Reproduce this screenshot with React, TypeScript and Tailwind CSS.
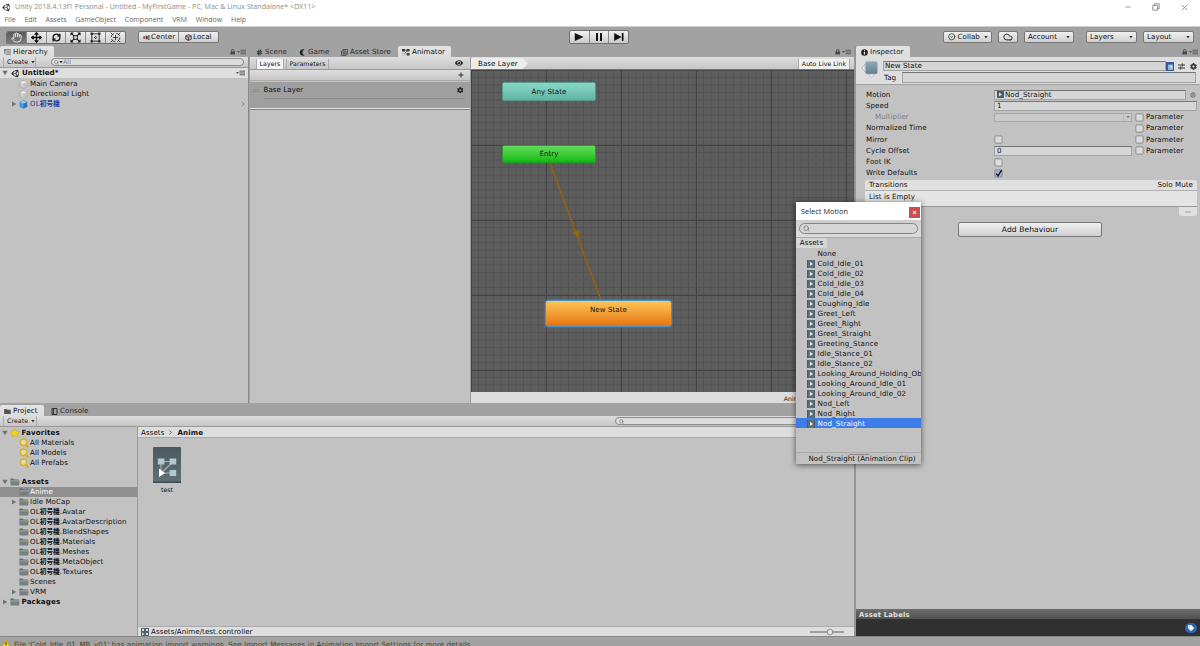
import React from 'react';
import clsx from 'clsx';
import { FaUnity, FaLock, FaCog, FaStar, FaEye, FaTag } from 'react-icons/fa';
import { Search, Minus, X, Move, RefreshCw, Cloud, CircleCheck, Hand, Hash, ChevronRight } from 'lucide-react';

const motions = [
  'Cold_Idle_01', 'Cold_Idle_02', 'Cold_Idle_03', 'Cold_Idle_04', 'Coughing_Idle', 'Greet_Left',
  'Greet_Right', 'Greet_Straight', 'Greeting_Stance', 'Idle_Stance_01', 'Idle_Stance_02',
  'Looking_Around_Holding_Object', 'Looking_Around_Idle_01', 'Looking_Around_Idle_02',
  'Nod_Left', 'Nod_Right', 'Nod_Straight',
];

const modelFolders = ['.Avatar', '.AvatarDescription', '.BlendShapes', '.Materials', '.Meshes', '.MetaObject', '.Textures'];

const buttonClass = 'flex items-center rounded-[2px] border border-[#777] bg-linear-to-b from-[#f0f0f0] to-[#cfcfcf]';
const barClass = 'bg-linear-to-b from-[#dedede] to-[#c6c6c6]';

/* ---------- small drawings ---------- */

const Arrow = ({ open, className }: { open?: boolean; className?: string }) => (
  <svg viewBox="0 0 6 6" className={clsx('size-[6px] shrink-0', className)}>
    <path d={open ? 'M.3 .8H5.7L3 5.2Z' : 'M1 .4V5.6L5.2 3Z'} fill="#737373" />
  </svg>
);

const Caret = () => (
  <svg viewBox="0 0 4 3" className="h-[2.5px] w-[4px] shrink-0">
    <path d="M0 0H4L2 3Z" fill="#333" />
  </svg>
);

const PanelMenu = () => (
  <svg viewBox="0 0 9 6" className="h-[6px] w-[9px] shrink-0">
    <path d="M0 2H3L1.5 4Z" fill="#555" />
    <path d="M3.5 1.2H9M3.5 3H9M3.5 4.8H9" stroke="#5c5c5c" strokeWidth="1" />
  </svg>
);

const PanelCorner = () => (
  <div className="flex items-center gap-[2px] pt-px">
    <FaLock size={5.5} color="#4a4a4a" />
    <PanelMenu />
  </div>
);

const Folder = () => (
  <svg viewBox="0 0 10 8" className="h-[8px] w-[10px] shrink-0">
    <path d="M.4 1.2C.4.8.6.5 1 .5H3.4L4.4 1.5H8.9V3H.4Z" fill="#66706f" />
    <path d="M.4 2.6H9.6L9.2 7.2C9.2 7.4 9 7.5 8.8 7.5H1C.6 7.5.4 7.3.4 7Z" fill="#75807f" />
    <path d="M.6 2.9H9.4" stroke="#b4bbbb" strokeWidth=".7" />
  </svg>
);

const Cube = ({ blue }: { blue?: boolean }) => (
  <svg viewBox="0 0 10 10" className="size-[9px] shrink-0">
    <path d="M5 .5L9 2.3V7.5L5 9.5L1 7.5V2.3Z" fill={blue ? '#4c9be0' : '#d0d0d0'} stroke={blue ? '#4284bd' : '#999'} strokeWidth=".6" />
    <path d="M5 .7L8.8 2.4L5 4.3L1.2 2.4Z" fill={blue ? '#8fcbf7' : '#e8e8e8'} />
    <path d="M5 4.3V9.3L8.8 7.4V2.5Z" fill={blue ? '#2d74b8' : '#c0c0c0'} />
  </svg>
);

const Clip = () => (
  <svg viewBox="0 0 8 8" className="size-[8px] shrink-0">
    <path d="M0 0H8V8H0Z" fill="#5d6e78" />
    <path d="M0 0H1V8H0ZM7 0H8V8H7Z" fill="#4b5b64" />
    <path d="M3 1.8V6L6 3.9Z" fill="#e6eef0" />
  </svg>
);

const Magnifier = () => (
  <svg viewBox="0 0 10 10" className="size-[10px] shrink-0">
    <path d="M6.6 6.6L8.8 8.8" stroke="#d3a91c" strokeWidth="2" strokeLinecap="round" />
    <circle cx="4.5" cy="4.3" r="3.2" fill="#dedac2" stroke="#dcb420" strokeWidth="1.5" />
  </svg>
);

const AnimatorGlyph = () => (
  <svg viewBox="0 0 8 8" className="size-[8px] shrink-0">
    <path d="M0 1H3V3.4H0ZM4.6 1H7.6V3.4H4.6ZM4.6 5H7.6V7.4H4.6Z" fill="#3c3c3c" />
    <path d="M1.5 2.2H6M1.5 6.6L5.5 2.4" stroke="#3c3c3c" strokeWidth=".7" />
    <path d="M.8 4.5V7.6L3 6Z" fill="#eee" stroke="#777" strokeWidth=".3" />
  </svg>
);

const ControllerIcon = () => (
  <svg viewBox="0 0 28 36" className="h-[36px] w-[28px]">
    <defs>
      <linearGradient id="ctrl" x1="0" y1="0" x2="0" y2="1">
        <stop offset="0" stopColor="#4c5960" />
        <stop offset="1" stopColor="#5f7075" />
      </linearGradient>
    </defs>
    <rect width="28" height="36" rx="1" fill="url(#ctrl)" />
    <path d="M0 34.5H28V36H0Z" fill="#3e4a50" />
    <path d="M8 14.5H20M8 14.5V25M8 26L20 15M9 26H20" stroke="#9fb2b8" strokeWidth="1.2" fill="none" />
    <path d="M4.8 11.5H11.4V17.5H4.8ZM16.6 11.5H23.2V17.5H16.6ZM16.6 23H23.2V29H16.6Z" fill="#b5c8ce" />
    <path d="M6 21.5V30L12 26.2Z" fill="#fff" />
  </svg>
);

const Warning = () => (
  <svg viewBox="0 0 10 9" className="h-[9px] w-[10px] shrink-0">
    <path d="M5 .5L9.6 8.5H.4Z" fill="#f5d91f" stroke="#a08a10" strokeWidth=".6" />
    <path d="M4.5 3H5.5V6H4.5ZM4.5 6.8H5.5V7.8H4.5Z" fill="#222" />
  </svg>
);

const OL = () => (
  <>OL<span className="font-['Noto_Sans_CJK_JP',sans-serif] text-[6.7px] leading-none font-bold">初号機</span></>
);

/* ---------- shared pieces ---------- */

const Tab = ({ active, className, children }: { active?: boolean; className?: string; children: React.ReactNode }) => (
  <div
    className={clsx(
      'flex h-[11px] items-center gap-[2px] rounded-t-[2px] pt-px',
      active ? 'bg-linear-to-b from-[#e4e4e4] to-[#dcdcdc] text-[#111]' : 'text-[#2d2d2d]',
      className,
    )}
  >
    {children}
  </div>
);

const Dropdown = ({ label, className }: { label: React.ReactNode; className?: string }) => (
  <div className={clsx(buttonClass, 'h-[12px] justify-between px-[3px]', className)}>
    {label}
    <Caret />
  </div>
);

const Checkbox = ({ checked }: { checked?: boolean }) => (
  <svg viewBox="0 0 9 9" className="size-[9px] shrink-0">
    <rect x=".9" y=".9" width="7.2" height="7.2" rx="1" fill={checked ? '#9cb5e2' : '#dcdcdc'} stroke="#747474" strokeWidth=".7" />
    {checked && <path d="M2.2 4.6L4 6.8L7.6 1.2" stroke="#111" strokeWidth="1.3" fill="none" />}
  </svg>
);

const TreeRow = ({ indent, open, arrow, icon, selected, children }: {
  indent?: boolean; open?: boolean; arrow?: boolean; icon: React.ReactNode; selected?: boolean; children: React.ReactNode;
}) => (
  <div className={clsx('flex h-[10px] items-center', selected && 'bg-[#8f8f8f] text-white', indent ? 'pl-[11px]' : 'pl-[2px]')}>
    <div className="flex w-[8px] shrink-0">{arrow && <Arrow open={open} />}</div>
    <div className={clsx('flex shrink-0', indent ? 'w-[11px]' : 'w-[11.5px]')}>{icon}</div>
    <span className={clsx('h-[10px] whitespace-nowrap', !indent && 'font-bold tracking-[0.15px]')}>{children}</span>
  </div>
);

const Property = ({ label, dim, param, children }: { label: string; dim?: boolean; param?: boolean; children?: React.ReactNode }) => (
  <div className="flex h-[11.25px] items-center">
    <span className={clsx('w-[128px] shrink-0', dim && 'pl-[9px] text-[#808080]')}>{label}</span>
    <div className="flex min-w-0 flex-1 items-center">{children}</div>
    {param && (
      <div className="flex w-[62px] shrink-0 items-center gap-[2px]">
        <Checkbox />
        Parameter
      </div>
    )}
  </div>
);

/* ---------- panels ---------- */

const TitleBar = () => (
  <header className="h-[26px] shrink-0 bg-white font-['Open_Sans',sans-serif] text-[7px] tracking-normal text-[#8a8a8a]">
    <div className="flex h-[14px] items-center justify-between pr-[11px] pl-[2px]">
      <div className="flex items-center gap-[4px]">
        <FaUnity size={9} color="#222" />
        <span className="tracking-[0.05px] whitespace-nowrap">Unity 2018.4.13f1 Personal - Untitled - MyFirstGame - PC, Mac &amp; Linux Standalone* &lt;DX11&gt;</span>
      </div>
      <div className="flex items-center gap-[20px] text-[#777]">
        <Minus size={8} strokeWidth={2} />
        <svg viewBox="0 0 8 8" className="size-[8px]" fill="none" stroke="#777" strokeWidth=".8">
          <path d="M.8 2.4H5.6V7.2H.8ZM2.4 2.4V.8H7.2V5.6H5.6" />
        </svg>
        <X size={9} strokeWidth={2} />
      </div>
    </div>
    <nav className="flex h-[12px] items-center gap-[8.8px] pl-[4.5px] text-[#666]">
      {['File', 'Edit', 'Assets', 'GameObject', 'Component', 'VRM', 'Window', 'Help'].map((item) => (
        <span key={item}>{item}</span>
      ))}
    </nav>
  </header>
);

const Toolbar = () => (
  <div className="flex h-[20px] shrink-0 items-center border-t border-[#d0d0d0] pt-px pr-[6px] pl-[6px]">
    <div className="flex h-[13px] w-[120px] divide-x divide-[#8a8a8a] overflow-hidden rounded-[2px] border border-[#6f6f6f] bg-linear-to-b from-[#eee] to-[#cfcfcf] *:flex *:flex-1 *:items-center *:justify-center">
      <div className="bg-linear-to-b from-[#5b5b5b] to-[#7b7b7b]"><Hand size={11} strokeWidth={2} color="#eee" /></div>
      <div><Move size={11} strokeWidth={3} color="#111" /></div>
      <div><RefreshCw size={9} strokeWidth={3.5} color="#111" /></div>
      <div>
        <svg viewBox="0 0 12 12" className="size-[11px]">
          <path d="M1.5 1.5L10.5 10.5M10.5 1.5L1.5 10.5" stroke="#111" strokeWidth="1.2" />
          <path d="M.5.5H4L.5 4ZM11.5.5H8L11.5 4ZM.5 11.5H4L.5 8ZM11.5 11.5H8L11.5 8Z" fill="#111" />
          <path d="M4 4H8V8H4Z" fill="#ddd" stroke="#111" />
        </svg>
      </div>
      <div>
        <svg viewBox="0 0 12 12" className="size-[11px]" fill="none" stroke="#222">
          <path d="M2 2H10V10H2Z" />
          <path d="M.6.6H3V3H.6ZM9 .6H11.4V3H9ZM.6 9H3V11.4H.6ZM9 9H11.4V11.4H9Z" fill="#222" stroke="none" />
          <circle cx="6" cy="6" r="1" />
        </svg>
      </div>
      <div>
        <svg viewBox="0 0 12 12" className="size-[11px]" fill="none" stroke="#333">
          <circle cx="6" cy="6" r="4.8" strokeDasharray="5.5 2" strokeWidth=".9" />
          <path d="M6 3.2V8.8M3.2 6H8.8M.8.8L3.4 3.4M11.2.8L8.6 3.4M.8 11.2L3.4 8.6M11.2 11.2L8.6 8.6" />
        </svg>
      </div>
    </div>
    <div className="ml-[12px] flex h-[12px] w-[81px] rounded-[2px] border border-[#777] bg-linear-to-b from-[#f0f0f0] to-[#cfcfcf]">
      <div className="flex w-[40px] items-center gap-px border-r border-[#888] pl-[4px]">
        <svg viewBox="0 0 8 6" className="h-[5px] w-[7px]">
          <path d="M0 2L2 1V5L0 4Z" fill="#a33" />
          <path d="M3 1H5.5V5H3ZM6.3 0H7.6V6H6.3Z" fill="#444" />
        </svg>
        Center
      </div>
      <div className="flex items-center gap-px pl-[6px]">
        <svg viewBox="0 0 8 8" className="size-[7px]" fill="none" stroke="#444">
          <path d="M4 .6L7.2 2.2V5.8L4 7.4L.8 5.8V2.2Z" fill="#bbb" />
          <path d="M.8 2.2L4 3.8L7.2 2.2M4 3.8V7.4" />
          <path d="M1 5.8L4 7.3" stroke="#b33" />
        </svg>
        Local
      </div>
    </div>
    <div className="ml-[350px] flex h-[14px] w-[60px] divide-x divide-[#8a8a8a] rounded-[2px] border border-[#6f6f6f] bg-linear-to-b from-[#f2f2f2] to-[#cacaca] *:flex *:flex-1 *:items-center *:justify-center">
      <div><svg viewBox="0 0 10 8" className="h-[8px] w-[10px]"><path d="M.8 0V8L9.6 4Z" fill="#111" /></svg></div>
      <div><svg viewBox="0 0 8 8" className="size-[8px]"><path d="M1 0H3V8H1ZM5 0H7V8H5Z" fill="#111" /></svg></div>
      <div><svg viewBox="0 0 10 8" className="h-[8px] w-[10px]"><path d="M.2 0V8L7.6 4ZM7.8 0H9.5V8H7.8Z" fill="#111" /></svg></div>
    </div>
    <div className="ml-auto flex">
      <Dropdown className="w-[49px]" label={<span className="flex items-center gap-[2px]"><CircleCheck size={7.5} strokeWidth={2} className="ml-px" />Collab</span>} />
      <div className={clsx(buttonClass, 'ml-[6px] h-[12px] w-[20px] justify-center')}>
        <Cloud size={10} strokeWidth={2} />
      </div>
      <Dropdown className="ml-[6px] w-[50px]" label="Account" />
      <Dropdown className="ml-[12px] w-[51px]" label="Layers" />
      <Dropdown className="ml-[6px] w-[51px]" label="Layout" />
    </div>
  </div>
);

const Hierarchy = () => (
  <section className="flex w-[249px] shrink-0 flex-col">
    <div className="flex h-[11px] items-center justify-between pr-[3px]">
      <Tab active className="w-[54px] pl-[4px]">
        <svg viewBox="0 0 8 7" className="h-[6px] w-[7px]" stroke="#444" fill="none"><path d="M0 1H8M2.5 3.5H8M2.5 6H8M1 1V6" strokeWidth=".9" /></svg>
        Hierarchy
      </Tab>
      <PanelCorner />
    </div>
    <div className="flex min-h-0 flex-1 flex-col border-r border-[#8a8a8a] bg-[#c2c2c2]">
      <div className={clsx(barClass, 'flex h-[11px] shrink-0 items-center border-b border-[#999]')}>
        <div className="ml-[3px] flex h-full w-[33px] items-center gap-[3px] border-r border-l border-[#aaa] pl-[3px] text-[6.3px]">
          Create <Caret />
        </div>
        <div className="ml-[15px] flex h-[8px] w-[193px] items-center rounded-full border border-[#8b8b8b] bg-[#dcdcdc] pl-[2px] text-[6.3px] text-[#777]">
          <Search size={5} strokeWidth={3} /><Caret />All
        </div>
      </div>
      <div className="flex h-[10px] shrink-0 items-center bg-[#dedede] pr-[3px] pl-[2px]">
        <Arrow open />
        <FaUnity size={9} className="ml-[3px]" color="#111" />
        <span className="ml-[2px] flex-1 font-bold">Untitled*</span>
        <PanelMenu />
      </div>
      <div className="pt-px">
        <TreeRow indent icon={<Cube />}>Main Camera</TreeRow>
        <TreeRow indent icon={<Cube />}>Directional Light</TreeRow>
        <div className="flex items-center justify-between text-[#1c3f9e]">
          <TreeRow indent arrow icon={<Cube blue />}><OL /></TreeRow>
          <ChevronRight size={8} strokeWidth={2.5} color="#777" className="mr-px" />
        </div>
      </div>
    </div>
  </section>
);

const minor = Array.from({ length: 52 }, (_, i) => i * 7.5);
const major = Array.from({ length: 6 }, (_, i) => i * 75);

const Graph = () => (
  <div className="relative min-h-0 flex-1 overflow-hidden bg-[#5d5d5d]">
    <svg viewBox="0 0 384 322" className="h-[322px] w-[384px]">
      {minor.map((p) => <path key={p} d={`M${p} 0V322M0 ${p}H384`} stroke="#525252" strokeWidth=".9" />)}
      {major.map((p) => <path key={p} d={`M${p + 0.5} 0V322M0 ${p + 0.5}H384`} stroke="#434343" strokeWidth="1" />)}
      <path d="M79 93L130 230" stroke="#8f6110" strokeWidth="1.7" />
      <path d="M101.5 162.5L108 160L107.7 168Z" fill="#9a6606" />
    </svg>
    <div className="absolute top-[12px] left-[31px] flex h-[19px] w-[94px] items-center justify-center rounded-[2px] border border-[#569a8c] bg-linear-to-b from-[#88d9c6] to-[#62b3a4]">Any State</div>
    <div className="absolute top-[75px] left-[31px] flex h-[18px] w-[94px] items-center justify-center rounded-[2px] border border-[#2a9a2a] bg-linear-to-b from-[#5fdc58] to-[#04bb08]">Entry</div>
    <div className="absolute top-[230px] left-[74px] flex h-[27px] w-[127px] justify-center rounded-[3px] border border-[#4a92cc] bg-linear-to-b from-[#fdc556] to-[#e57405] pt-[4px] shadow-[0_0_2px_#4a92cc]">New State</div>
  </div>
);

const Animator = () => (
  <section className="flex min-w-0 flex-1 flex-col pl-px">
    <div className="flex h-[11px] items-center pr-[3px]">
      <Tab className="ml-[6px] w-[43px]"><Hash size={7} strokeWidth={3} />Scene</Tab>
      <Tab className="w-[42px]">
        <svg viewBox="0 0 7 7" className="size-[7px]"><path d="M5.6.6A3.3 3.3 0 1 0 5.6 6.4L3.6 5V2Z" fill="#222" /></svg>
        Game
      </Tab>
      <Tab className="w-[59px]">
        <svg viewBox="0 0 7 7" className="size-[7px] shrink-0" fill="none" stroke="#444" strokeWidth=".8"><path d="M.5 2H5V6.5H.5ZM2 2V.5H6.5V5H5M2 3.5H3.7V5H2Z" /></svg>
        <span className="whitespace-nowrap">Asset Store</span>
      </Tab>
      <Tab active className="ml-[-2px] w-[53px] pl-[4px]"><AnimatorGlyph />Animator</Tab>
      <div className="ml-auto"><PanelCorner /></div>
    </div>
    <div className="flex min-h-0 flex-1">
      <div className="flex w-[221px] shrink-0 flex-col border-r border-[#999] bg-[#c2c2c2]">
        <div className={clsx(barClass, 'flex h-[13px] shrink-0 items-end border-b border-[#999] text-[6.2px]')}>
          <div className="ml-[6px] flex h-[10px] w-[28px] items-center justify-center border-x border-[#aaa] bg-[#f4f4f4]">Layers</div>
          <div className="ml-[2px] flex h-[10px] w-[43px] items-center justify-center border-x border-[#aaa]">Parameters</div>
          <FaEye size={8} className="mr-[7px] mb-[2px] ml-auto" color="#222" />
        </div>
        <div className={clsx(barClass, 'flex h-[11px] shrink-0 items-center justify-end border-b border-[#aaa] pr-[6px]')}>
          <svg viewBox="0 0 6 6" className="size-[6px]"><path d="M3 .5V5.5M.5 3H5.5" stroke="#333" strokeWidth="1.1" /></svg>
        </div>
        <div className="mt-px flex h-[26px] shrink-0 gap-[4.5px] bg-[#9f9f9f] pt-[3px] pr-[6px] pl-[3px]">
          <div className="mt-[4px] h-[3px] w-[6px] border-y border-[#8c8c8c]" />
          <div className="h-[14px] flex-1 border-b border-[#898989]">
            <div className="flex h-[10px] items-center justify-between pr-px">Base Layer <FaCog size={6.5} color="#222" /></div>
          </div>
        </div>
        <div className="h-[2px] shrink-0 border-b border-[#848484] bg-[#e2e2e2]" />
      </div>
      <div className="flex min-w-0 flex-1 flex-col">
        <div className={clsx(barClass, 'flex h-[13px] shrink-0 items-end justify-between border-b border-[#777]')}>
          <div className="flex h-[11px] w-[57px] items-center bg-[#ececec] pl-[7px] [clip-path:polygon(0_0,91%_0,100%_50%,91%_100%,0_100%)]">Base Layer</div>
          <div className="mr-[4px] flex h-[10px] w-[52px] items-center justify-center border-x border-[#aaa] bg-[#f0f0f0] text-[6.2px] whitespace-nowrap">Auto Live Link</div>
        </div>
        <Graph />
        <div className="flex h-[11px] shrink-0 items-center justify-end bg-[#dcdcdc] pt-[2px] pr-[4px] text-[6.2px] whitespace-nowrap">Anime/test.controller</div>
      </div>
    </div>
  </section>
);

const Project = () => (
  <section className="flex h-[231px] shrink-0 flex-col">
    <div className="flex h-[11px] items-center">
      <Tab active className="w-[44px] pl-[4px]"><svg viewBox="0 0 8 6" className="h-[5px] w-[7px]"><path d="M0 0H3L4 1H8V6H0Z" fill="#555" /></svg>Project</Tab>
      <Tab className="pl-[7px]"><svg viewBox="0 0 7 7" className="size-[7px]" fill="none" stroke="#333"><path d="M1 .5H6V6.5H1ZM2.5.5V6.5" /></svg>Console</Tab>
    </div>
    <div className={clsx(barClass, 'flex h-[11px] shrink-0 items-center border-b border-[#999]')}>
      <div className="ml-[3px] flex h-full w-[34px] items-center gap-[3px] border-r border-l border-[#aaa] pl-[3px] text-[6.3px]">Create <Caret /></div>
      <div className="ml-[578px] flex h-[8px] w-[230px] items-center rounded-full border border-[#8b8b8b] bg-[#dcdcdc] pl-[3px]"><Search size={5} strokeWidth={3} color="#777" /></div>
    </div>
    <div className="flex min-h-0 flex-1">
      <div className="w-[138px] shrink-0 border-r border-[#999] bg-[#c2c2c2] pt-px">
        <TreeRow arrow open icon={<FaStar size={9.5} color="#f5cf1a" stroke="#b98e10" strokeWidth={20} />}>Favorites</TreeRow>
        <TreeRow indent icon={<Magnifier />}>All Materials</TreeRow>
        <TreeRow indent icon={<Magnifier />}>All Models</TreeRow>
        <TreeRow indent icon={<Magnifier />}>All Prefabs</TreeRow>
        <div className="h-[9px]" />
        <TreeRow arrow open icon={<Folder />}>Assets</TreeRow>
        <TreeRow indent selected icon={<Folder />}>Anime</TreeRow>
        <TreeRow indent arrow icon={<Folder />}>Idle MoCap</TreeRow>
        {modelFolders.map((name) => (
          <TreeRow key={name} indent icon={<Folder />}><OL />{name}</TreeRow>
        ))}
        <TreeRow indent icon={<Folder />}>Scenes</TreeRow>
        <TreeRow indent arrow icon={<Folder />}>VRM</TreeRow>
        <TreeRow arrow icon={<Folder />}>Packages</TreeRow>
      </div>
      <div className="flex min-w-0 flex-1 flex-col bg-[#c2c2c2]">
        <div className="flex h-[11px] shrink-0 items-center border-b border-[#aaa] bg-[#dedede] pt-px pl-[3px]">
          Assets <ChevronRight size={7} strokeWidth={2} className="mx-[3px]" /> <b className="tracking-[0.15px]">Anime</b>
        </div>
        <div className="flex flex-1 flex-col pt-[9px] pl-[15px]">
          <div className="flex w-[28px] flex-col items-center gap-[3px] text-[6.2px]">
            <ControllerIcon />
            <span className="leading-[8px]">test</span>
          </div>
        </div>
        <div className="flex h-[10px] shrink-0 items-center border-t border-[#aaa] bg-[#dedede] pr-[10px] pl-[3px]">
          <svg viewBox="0 0 8 8" className="mr-[2px] size-[8px]"><path d="M0 0H8V8H0Z" fill="#52636b" /><path d="M1 1H3V3H1ZM5 1H7V3H5ZM5 5H7V7H5ZM1 4.5L3.5 6L1 7.5Z" fill="#d5e0e4" /></svg>
          <span className="flex-1">Assets/Anime/test.controller</span>
          <svg viewBox="0 0 34 8" className="h-[8px] w-[34px]">
            <path d="M0 4H34" stroke="#888" strokeWidth="1.6" />
            <circle cx="20" cy="4" r="2.8" fill="#e2e2e2" stroke="#777" strokeWidth=".8" />
          </svg>
        </div>
      </div>
    </div>
  </section>
);

const fieldClass = 'flex items-center border border-[#a2a2a2] border-t-[#777] bg-[#d6d6d6]';

const Inspector = () => (
  <section className="flex w-[346px] shrink-0 flex-col border-l-2 border-[#959595]">
    <div className="flex h-[11px] items-center justify-between pr-[2px]">
      <Tab active className="w-[54px] pl-[5px]">
        <svg viewBox="0 0 7 7" className="size-[7px]"><circle cx="3.5" cy="3.5" r="3.3" fill="#222" /><path d="M3 1.2H4.1V2.2H3ZM2.8 2.9H4.1V5.6H2.8Z" fill="#eee" /></svg>
        Inspector
      </Tab>
      <PanelCorner />
    </div>
    <div className="flex min-h-0 flex-1 flex-col bg-[#c2c2c2]">
      <div className="flex h-[28px] shrink-0 border-b border-[#a0a0a0] bg-[#dedede] pl-[5px]">
        <svg viewBox="0 0 18 20" className="mt-[2px] h-[20px] w-[18px] shrink-0">
          <defs><linearGradient id="state" x1="0" y1="0" x2="0" y2="1"><stop offset="0" stopColor="#8eaab8" /><stop offset="1" stopColor="#647f8e" /></linearGradient></defs>
          <path d="M4 5L1 9L4 13ZM7 15H14L10.5 18.5Z" fill="#eee" stroke="#aaa" strokeWidth=".7" />
          <rect x="4.5" y="2.5" width="12" height="12.5" rx="1.5" fill="url(#state)" stroke="#a9bac2" strokeWidth=".6" />
        </svg>
        <div className="ml-[4px] flex min-w-0 flex-1 flex-col gap-px pt-[4px]">
          <div className="flex h-[10px] items-center">
            <div className={clsx(fieldClass, 'h-[10px] w-[283px] pl-px')}>New State</div>
            <svg viewBox="0 0 8 9" className="h-[9px] w-[8px]"><path d="M0 0H8V9H0Z" fill="#375a90" /><path d="M2 2.5H7V8H2Z" fill="#8fb0d8" /><path d="M3.5 4H5.5V5.5L4.5 6.5" stroke="#fff" strokeWidth=".8" fill="none" /></svg>
            <svg viewBox="0 0 8 8" className="ml-[4px] size-[7px]" stroke="#333" fill="none"><path d="M0 2.3H8M0 5.7H8M5 .5V4M3 4V7.5" strokeWidth="1.1" /></svg>
            <FaCog size={7} className="ml-[5px]" color="#333" />
          </div>
          <div className="flex items-center">
            <span className="w-[19px] pl-px">Tag</span>
            <div className={clsx(fieldClass, 'h-[11px] w-[294px]')} />
          </div>
        </div>
      </div>
      <div className="flex flex-col pt-[4px] pr-[3px] pl-[10px]">
        <Property label="Motion">
          <div className={clsx(fieldClass, 'h-[10px] w-[192px] gap-px pl-[2px]')}>
            <svg viewBox="0 0 7 7" className="size-[7px]"><path d="M0 0H7V7H0Z" fill="#4a5c65" /><path d="M2 1.5V5.5L5 3.5Z" fill="#dce6ea" /></svg>
            Nod_Straight
          </div>
          <svg viewBox="0 0 6 6" className="ml-[4px] size-[6px]" fill="none" stroke="#555"><circle cx="3" cy="3" r="2.2" strokeWidth=".8" /><circle cx="3" cy="3" r=".6" strokeWidth=".6" /></svg>
        </Property>
        <Property label="Speed"><div className={clsx(fieldClass, 'h-[10px] w-full pl-[2px]')}>1</div></Property>
        <Property label="Multiplier" dim param>
          <div className="flex h-[9px] w-[138px] justify-end border border-[#a8a8a8] bg-[#cacaca]">
            <div className="flex w-[8px] items-center justify-center border-l border-[#a8a8a8] opacity-50"><Caret /></div>
          </div>
        </Property>
        <Property label="Normalized Time" param />
        <Property label="Mirror" param><Checkbox /></Property>
        <Property label="Cycle Offset" param><div className={clsx(fieldClass, 'h-[10px] w-[138px] pl-[2px]')}>0</div></Property>
        <Property label="Foot IK"><Checkbox /></Property>
        <Property label="Write Defaults"><Checkbox checked /></Property>
      </div>
      <div className="mt-px mr-[3px] ml-[9px] shrink-0">
        <div className="flex h-[11px] items-center justify-between rounded-t-[2px] border-b border-[#b0b0b0] bg-[#e0e0e0] pr-[4px] pl-[4px]">
          <span>Transitions</span><span>Solo Mute</span>
        </div>
        <div className="h-[16px] border-b border-[#999] bg-[#e4e4e4] pt-px pl-[4px] leading-[10px]">List is Empty</div>
        <div className="ml-auto flex h-[9px] w-[18px] items-center justify-center rounded-b-[2px] bg-[#e0e0e0] text-[#999]">
          <Minus size={8} strokeWidth={3} />
        </div>
      </div>
      <div className={clsx(buttonClass, 'mt-[6px] ml-[102px] h-[15px] w-[144px] shrink-0 justify-center text-[7.6px]')}>Add Behaviour</div>
      <div className="mt-auto flex h-[11px] shrink-0 items-center border-b border-[#333] bg-linear-to-b from-[#6e6e6e] to-[#515151] pt-px pl-[3px] text-[6.8px] font-bold tracking-[0.2px] text-[#e0e0e0]">Asset Labels</div>
      <div className="flex h-[16px] shrink-0 items-center justify-end bg-[#303030] pr-[3px]">
        <div className="flex h-[10px] w-[12px] items-center justify-center rounded-full bg-[#2e67b8]"><FaTag size={6} color="#fff" /></div>
      </div>
    </div>
  </section>
);

const SelectMotion = () => (
  <div className="absolute top-[202px] left-[796px] flex h-[262px] w-[125px] flex-col overflow-hidden bg-[#c2c2c2] shadow-[0_1px_6px_rgba(0,0,0,0.6)]">
    <div className="flex h-[18px] shrink-0 items-center justify-between bg-white pl-[5px] font-['Open_Sans',sans-serif] text-[7.3px] text-[#222]">
      Select Motion
      <div className="mt-[2px] mr-px flex size-[11px] items-center justify-center bg-[#c74f50]"><X size={5} strokeWidth={5} color="#fff" /></div>
    </div>
    <div className="flex h-[17px] shrink-0 items-center bg-linear-to-b from-[#cfcfcf] to-[#dcdcdc] px-[3px]">
      <div className="flex h-[11px] w-full items-center rounded-full border border-[#858585] bg-[#d5d5d5] pl-[3px]"><Search size={7} strokeWidth={2.5} color="#777" /></div>
    </div>
    <div className="flex h-[11px] shrink-0 border-t border-[#aaa]">
      <div className="flex w-[31px] items-center justify-center rounded-tr-[2px] bg-[#d6d6d6]">Assets</div>
    </div>
    <div className="flex h-[10px] shrink-0 items-center pt-px pl-[21.5px]">None</div>
    {motions.map((name) => (
      <div key={name} className={clsx('flex h-[10px] shrink-0 items-center gap-[2.5px] pt-px pl-[11px] tracking-[0.14px] whitespace-nowrap', name === 'Nod_Straight' && 'bg-[#3e7de7] text-white')}>
        <Clip />
        {name}
      </div>
    ))}
    <div className="mt-auto flex h-[12px] shrink-0 flex-col items-center border-t border-[#aaa]">
      <div className="h-[2px] w-[20px] shrink-0 border-b border-[#888]" />
      <span className="pl-[7px] leading-[7px] whitespace-nowrap">Nod_Straight (Animation Clip)</span>
    </div>
  </div>
);

export default function App() {
  return (
    <div className="relative flex h-[646px] w-[1200px] flex-col overflow-hidden bg-[#a2a2a2] font-['DejaVu_Sans','Noto_Sans_CJK_JP',sans-serif] text-[7.1px] leading-[10px] tracking-[0.05px] text-[#111]">
      <TitleBar />
      <Toolbar />
      <div className="flex h-[590px] shrink-0">
        <div className="flex min-w-0 flex-1 flex-col">
          <div className="flex h-[357px] shrink-0">
            <Hierarchy />
            <Animator />
          </div>
          <div className="h-[2px] shrink-0" />
          <Project />
        </div>
        <Inspector />
      </div>
      <footer className="flex h-[10px] shrink-0 items-start gap-[3px] overflow-hidden border-t border-[#888] pt-[2px] pl-px text-[#45421d]">
        <Warning />
        <span className="leading-[11px] whitespace-nowrap">File 'Cold_Idle_01_MB_v01' has animation import warnings. See Import Messages in Animation Import Settings for more details.</span>
      </footer>
      <SelectMotion />
    </div>
  );
}
